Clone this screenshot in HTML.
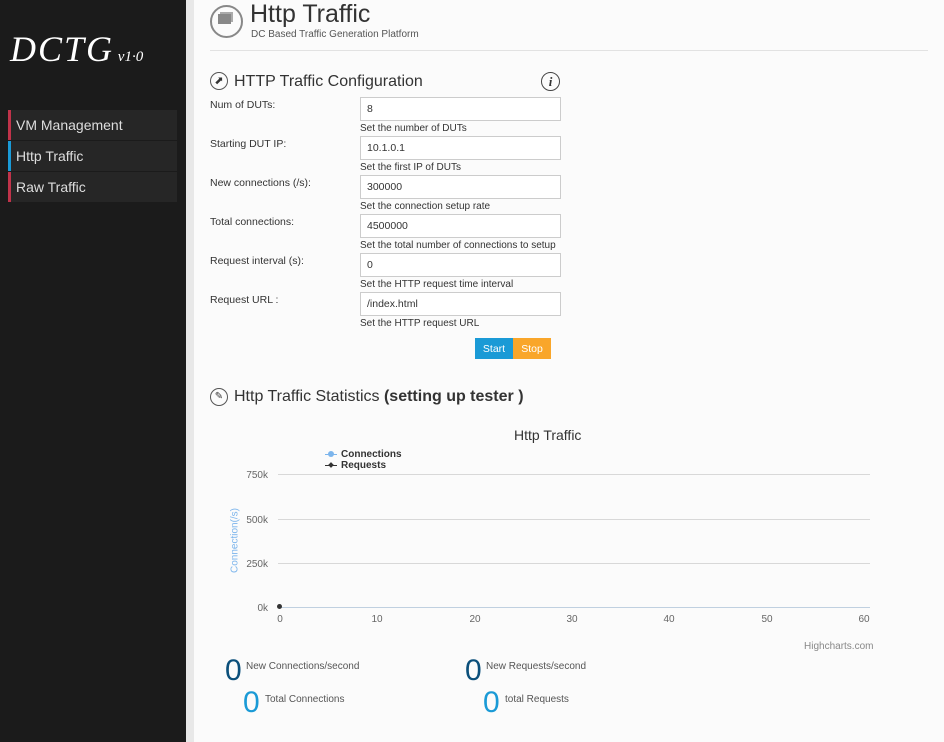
<!DOCTYPE html>
<html><head><meta charset="utf-8"><style>
body{margin:0;width:944px;height:742px;overflow:hidden;background:#fbfbfb;font-family:"Liberation Sans",sans-serif;position:relative;color:#333}
.a{position:absolute}
#sb{left:0;top:0;width:186px;height:742px;background:#1b1b1b}
#gap{left:186px;top:0;width:8px;height:742px;background:#e8e8e8}
.mi{left:8px;width:161px;height:30px;background:#262626;color:#ddd;font-size:14px;line-height:30px;padding-left:5px;border-left:3px solid #c0334a}
.lb{left:210px;font-size:10.5px;color:#333}
.in{left:360px;width:193px;height:22px;border:1px solid #ccc;background:#fff;font-size:10.5px;line-height:22px;padding-left:6px;color:#333}
.hp{left:360px;font-size:10px;color:#333}
.gl{left:278px;width:592px;height:1px;background:#d8d8d8}
.yl{font-size:10px;color:#666;width:40px;text-align:right;left:228px}
.xl{font-size:10px;color:#666;top:614px;width:30px;text-align:center}
</style></head><body>
<div class="a" id="sb"></div><div class="a" id="gap"></div>
<div class="a" style="left:10px;top:28px;color:#fff;font:italic 36px 'Liberation Serif',serif;letter-spacing:2px">DCTG<span style="font-size:15px;letter-spacing:0"> v1·0</span></div>
<div class="a mi" style="top:110px">VM Management</div>
<div class="a mi" style="top:141px;border-left-color:#1a9ad6">Http Traffic</div>
<div class="a mi" style="top:172px">Raw Traffic</div>

<div class="a" style="left:210px;top:5px;width:29px;height:29px;border:2px solid #888;border-radius:50%"></div>
<div class="a" style="left:218px;top:14px;width:13px;height:10px;background:#888;box-shadow:2px -2px 0 #aaa"></div>
<div class="a" style="left:250px;top:0px;font-size:25px;color:#333">Http Traffic</div>
<div class="a" style="left:251px;top:29px;font-size:10px;color:#555">DC Based Traffic Generation Platform</div>
<div class="a" style="left:210px;top:50px;width:718px;height:1px;background:#e2e2e2"></div>

<div class="a" style="left:210px;top:72px;width:16px;height:16px;border:1.5px solid #555;border-radius:50%;font-size:11px;text-align:center;line-height:16px">⬈</div>
<div class="a" style="left:234px;top:73px;font-size:16px;color:#333">HTTP Traffic Configuration</div>
<div class="a" style="left:541px;top:72px;width:17px;height:17px;border:1.5px solid #444;border-radius:50%;font:italic bold 13px 'Liberation Serif',serif;text-align:center;line-height:17px">i</div>

<div class="a lb" style="top:99px">Num of DUTs:</div><div class="a in" style="top:97px">8</div><div class="a hp" style="top:123px">Set the number of DUTs</div>
<div class="a lb" style="top:138px">Starting DUT IP:</div><div class="a in" style="top:136px">10.1.0.1</div><div class="a hp" style="top:162px">Set the first IP of DUTs</div>
<div class="a lb" style="top:177px">New connections (/s):</div><div class="a in" style="top:175px">300000</div><div class="a hp" style="top:201px">Set the connection setup rate</div>
<div class="a lb" style="top:216px">Total connections:</div><div class="a in" style="top:214px">4500000</div><div class="a hp" style="top:240px">Set the total number of connections to setup</div>
<div class="a lb" style="top:255px">Request interval (s):</div><div class="a in" style="top:253px">0</div><div class="a hp" style="top:279px">Set the HTTP request time interval</div>
<div class="a lb" style="top:294px">Request URL :</div><div class="a in" style="top:292px">/index.html</div><div class="a hp" style="top:318px">Set the HTTP request URL</div>

<div class="a" style="left:475px;top:338px;width:38px;height:21px;background:#1a9ad6;color:#fff;font-size:10.5px;line-height:22px;text-align:center">Start</div>
<div class="a" style="left:513px;top:338px;width:38px;height:21px;background:#f9a62a;color:#fff;font-size:10.5px;line-height:22px;text-align:center">Stop</div>

<div class="a" style="left:210px;top:388px;width:16px;height:16px;border:1.5px solid #555;border-radius:50%;font-size:10px;text-align:center;line-height:16px">✎</div>
<div class="a" style="left:234px;top:388px;font-size:16px;color:#333">Http Traffic Statistics <b>(setting up tester )</b></div>

<div class="a" style="left:514px;top:427px;font-size:14px;color:#333">Http Traffic</div>
<div class="a" style="left:325px;top:454px;width:12px;height:1px;background:#7cb5ec"></div><div class="a" style="left:328px;top:451px;width:6px;height:6px;border-radius:50%;background:#7cb5ec"></div>
<div class="a" style="left:341px;top:449px;font-size:10px;font-weight:bold">Connections</div>
<div class="a" style="left:325px;top:465px;width:12px;height:1px;background:#333"></div><div class="a" style="left:329px;top:463px;width:4px;height:4px;background:#333;transform:rotate(45deg)"></div>
<div class="a" style="left:341px;top:460px;font-size:10px;font-weight:bold">Requests</div>

<div class="a gl" style="top:474px"></div><div class="a gl" style="top:519px"></div><div class="a gl" style="top:563px"></div><div class="a gl" style="top:607px;background:#c0d0e0"></div>
<div class="a yl" style="top:470px">750k</div><div class="a yl" style="top:515px">500k</div><div class="a yl" style="top:559px">250k</div><div class="a yl" style="top:603px">0k</div>
<div class="a" style="left:200px;top:535px;font-size:10px;color:#7cb5ec;transform:rotate(-90deg);width:70px;text-align:center">Connection(/s)</div>
<div class="a" style="left:277px;top:604px;width:5px;height:5px;border-radius:50%;background:#333"></div>
<div class="a xl" style="left:265px">0</div><div class="a xl" style="left:362px">10</div><div class="a xl" style="left:460px">20</div><div class="a xl" style="left:557px">30</div><div class="a xl" style="left:654px">40</div><div class="a xl" style="left:752px">50</div><div class="a xl" style="left:849px">60</div>
<div class="a" style="left:804px;top:641px;font-size:10px;color:#888">Highcharts.com</div>

<div class="a" style="left:225px;top:654px;font-size:30px;color:#0b4f7a">0</div>
<div class="a" style="left:246px;top:661px;font-size:10px;color:#555">New Connections/second</div>
<div class="a" style="left:465px;top:654px;font-size:30px;color:#0b4f7a">0</div>
<div class="a" style="left:486px;top:661px;font-size:10px;color:#555">New Requests/second</div>
<div class="a" style="left:243px;top:686px;font-size:30px;color:#1a9ad6">0</div>
<div class="a" style="left:265px;top:694px;font-size:10px;color:#555">Total Connections</div>
<div class="a" style="left:483px;top:686px;font-size:30px;color:#1a9ad6">0</div>
<div class="a" style="left:505px;top:694px;font-size:10px;color:#555">total Requests</div>
</body></html>
